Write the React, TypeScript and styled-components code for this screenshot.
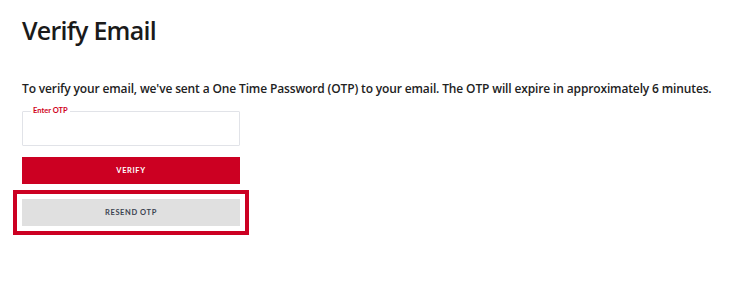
import React from "react";
import styled, { createGlobalStyle } from "styled-components";

const Global = createGlobalStyle`
  html, body { margin: 0; padding: 0; background: #fff; }
  body { font-family: "Open Sans", "Liberation Sans", sans-serif; color: #1f1f1f; }
  * { box-sizing: border-box; }
`;

const Page = styled.main`
  padding: 13px 22px 40px 22px;
  display: flex;
  flex-direction: column;
`;

const Title = styled.h1`
  margin: 0;
  font-family: "Open Sans", sans-serif;
  font-weight: 600;
  font-size: 25px;
  line-height: 34px;
  letter-spacing: -0.75px;
  color: #1a1a1a;
`;

const Intro = styled.p`
  margin: 33px 0 0 0;
  font-size: 12px;
  line-height: 18px;
  font-weight: 600;
  letter-spacing: -0.14px;
  color: #222;
  white-space: nowrap;
`;

const Form = styled.form`
  margin-top: 13px;
  width: 218px;
  display: flex;
  flex-direction: column;
`;

const Field = styled.fieldset`
  margin: 0;
  padding: 0 8px;
  height: 40px;
  border: 1px solid #e1e3e8;
  border-radius: 1px;
  margin-top: -5px;
`;

const Legend = styled.legend`
  padding: 0 2px;
  margin-left: 0;
  font-family: "Lato", sans-serif;
  font-size: 7.5px;
  line-height: 10px;
  color: #d0021b;
  font-weight: 700;
`;

const Input = styled.input`
  border: none;
  outline: none;
  width: 100%;
  height: 24px;
  background: transparent;
  font-size: 12px;
`;

type BtnProps = { $variant: "primary" | "secondary" };

const Button = styled.button<BtnProps>`
  display: block;
  height: 27px;
  width: 218px;
  border: none;
  border-radius: 0;
  font-family: "Lato", sans-serif;
  font-weight: 700;
  font-size: 7.5px;
  letter-spacing: 0.6px;
  text-transform: uppercase;
  cursor: pointer;
  background: ${(p) => (p.$variant === "primary" ? "#cc0022" : "#e0e0e0")};
  color: ${(p) => (p.$variant === "primary" ? "#ffffff" : "#3b4350")};
`;

const PrimaryRow = styled.div`
  margin-top: 11px;
`;

const Highlight = styled.div`
  margin: 6px 0 0 -9px;
  width: 236px;
  padding: 5px;
  border: 4px solid #cc0022;
`;

export default function App() {
  return (
    <>
      <Global />
      <Page>
        <Title>Verify Email</Title>
        <Intro>
          To verify your email, we've sent a One Time Password (OTP) to your email. The OTP will expire in approximately 6 minutes.
        </Intro>
        <Form onSubmit={(e) => e.preventDefault()}>
          <Field>
            <Legend>Enter OTP</Legend>
            <Input type="text" />
          </Field>
          <PrimaryRow>
            <Button type="submit" $variant="primary">Verify</Button>
          </PrimaryRow>
          <Highlight>
            <Button type="button" $variant="secondary">Resend OTP</Button>
          </Highlight>
        </Form>
      </Page>
    </>
  );
}
